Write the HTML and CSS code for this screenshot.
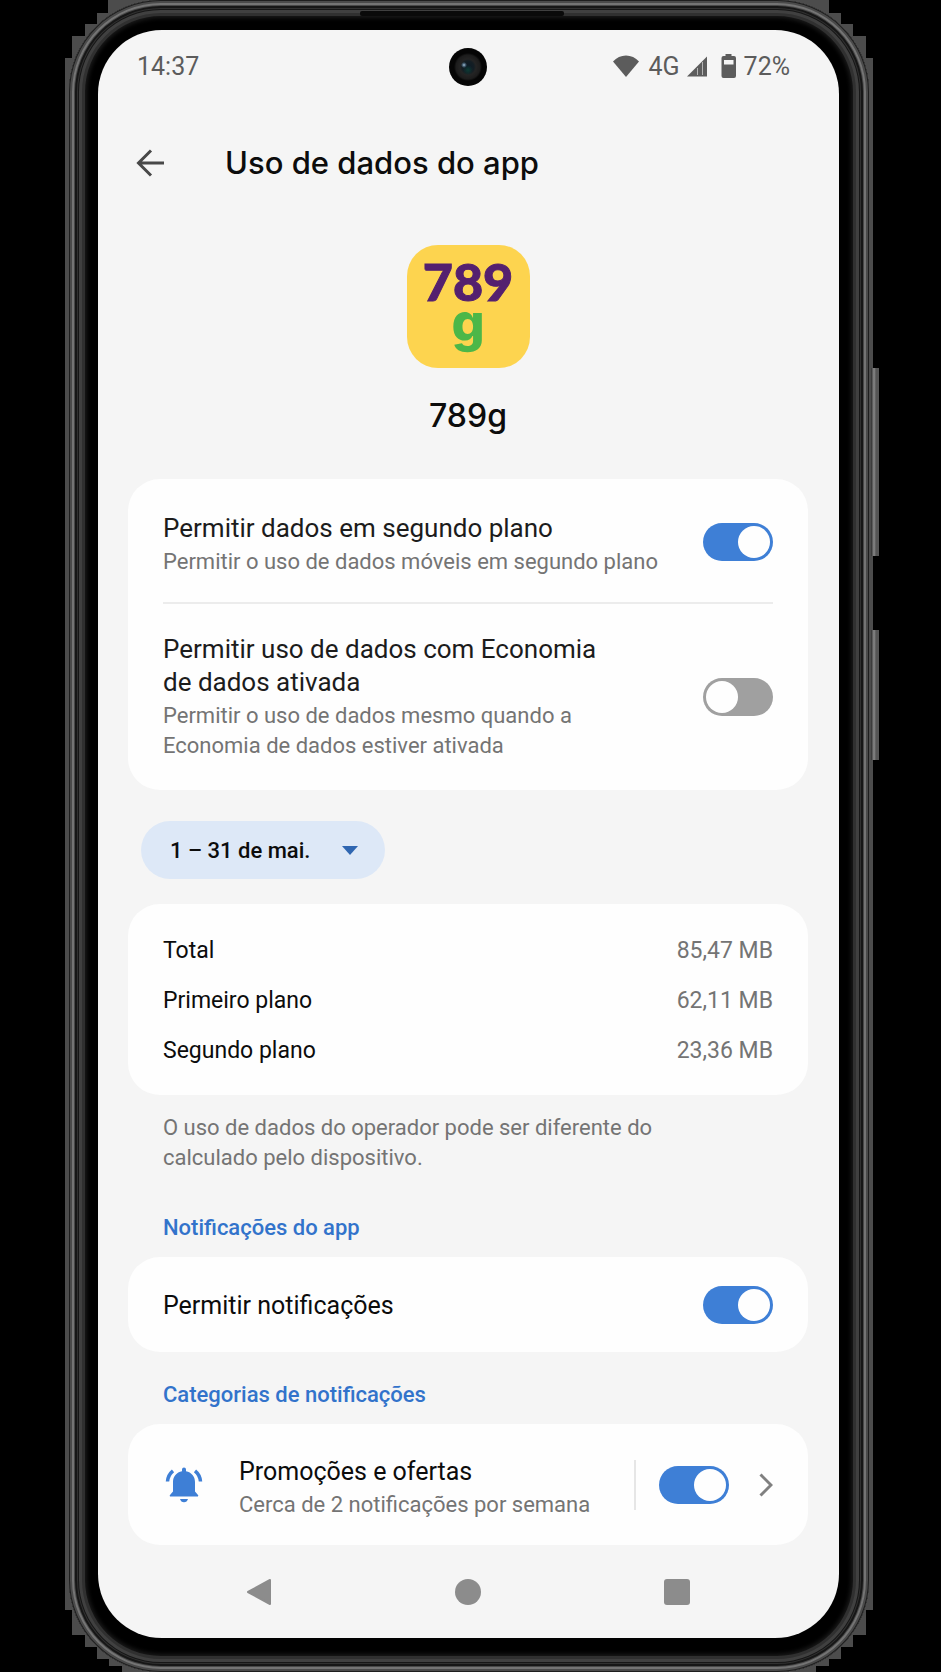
FILE: index.html
```
<!DOCTYPE html>
<html lang="pt-BR">
<head>
<meta charset="utf-8">
<meta name="viewport" content="width=device-width, initial-scale=1">
<title>Uso de dados do app</title>
<link rel="stylesheet" href="styles.css">
</head>
<body>
<div class="device">
	<div class="edge"></div>
	<span class="key key-volume"></span>
	<span class="key key-power"></span>
	<div class="frame">
		<span class="speaker"></span>
		<div class="screen">

			<div class="status">
				<span>14:37</span>
				<span class="camera"></span>
				<div class="status-icons">
					<svg width="28" height="24" viewBox="0 0 28 24" fill="#5c5c5c"><path d="M1 7.500C4.500 3.500 9 1.500 14 1.500s9.500 2 13 6L14 23z"/></svg>
					<span class="network">4G</span>
					<svg class="signal" width="22" height="24" viewBox="0 0 22 24"><path d="M1 22.500 21 2.500v20z" fill="#5c5c5c"/><path d="M11.500 14v7M16.500 8v13" stroke="#b4b4b4"/></svg>
					<svg class="battery" width="16" height="24" viewBox="0 0 16 24"><path fill="#5c5c5c" fill-rule="evenodd" d="M4.500 0h6v2H13a2 2 0 0 1 2 2v18a2 2 0 0 1-2 2H2.500a2 2 0 0 1-2-2V4a2 2 0 0 1 2-2h2zM3 6v4.500h9.500V6z"/></svg>
					<span>72%</span>
				</div>
			</div>

			<div class="topbar">
				<button class="back" type="button" aria-label="Voltar">
					<svg width="28" height="28" viewBox="0 0 28 28" fill="none" stroke="#484848" stroke-width="3"><path d="M28 14H3M15 1.500 2.500 14 15 26.500"/></svg>
				</button>
				<h1>Uso de dados do app</h1>
			</div>

			<div class="app">
				<div class="app-icon">
					<span class="logo-num">789</span>
					<span class="logo-g">g</span>
				</div>
				<div class="app-name">789g</div>
			</div>

			<div class="card">
				<label class="row row-bg">
					<span class="text">
						<span class="name">Permitir dados em segundo plano</span>
						<span class="desc">Permitir o uso de dados móveis em segundo plano</span>
					</span>
					<input class="switch" type="checkbox" checked>
				</label>
				<label class="row row-saver">
					<span class="text">
						<span class="name">Permitir uso de dados com Economia<br>de dados ativada</span>
						<span class="desc">Permitir o uso de dados mesmo quando a<br>Economia de dados estiver ativada</span>
					</span>
					<input class="switch" type="checkbox">
				</label>
			</div>

			<div class="period">
				<select aria-label="Período">
					<option>1 – 31 de mai.</option>
				</select>
				<svg width="16" height="9" viewBox="0 0 16 9"><path d="M0 0h16L8 9z" fill="#2f66b1"/></svg>
			</div>

			<div class="card usage">
				<table>
					<tr><th scope="row">Total</th><td>85,47 MB</td></tr>
					<tr><th scope="row">Primeiro plano</th><td>62,11 MB</td></tr>
					<tr><th scope="row">Segundo plano</th><td>23,36 MB</td></tr>
				</table>
			</div>

			<p class="note">O uso de dados do operador pode ser diferente do<br>calculado pelo dispositivo.</p>

			<h2>Notificações do app</h2>
			<div class="card">
				<label class="row row-notify">
					<span class="text name strong">Permitir notificações</span>
					<input class="switch" type="checkbox" checked>
				</label>
			</div>

			<h2 class="second">Categorias de notificações</h2>
			<div class="card">
				<div class="row row-category">
					<svg class="bell" width="38" height="38" viewBox="0 0 38 38" fill="#3e7fd6">
						<path d="M17 3.500a2 2 0 0 1 4 0v1.800c5.500 1 9 5.200 9 10.700v9.500l3 3.500c.6.800.2 1.500-.7 1.500H5.700c-.9 0-1.300-.7-.7-1.500l3-3.500V16c0-5.500 3.500-9.700 9-10.700zM15 33h8c-.5 2-2 3.300-4 3.300S15.500 35 15 33z"/>
						<path d="M2.500 15.500c.3-4.500 2.200-8 5.500-10.700M35.500 15.500c-.3-4.500-2.200-8-5.500-10.700" fill="none" stroke="#3e7fd6" stroke-width="3.500"/>
					</svg>
					<label class="text" for="promo">
						<span class="name strong">Promoções e ofertas</span>
						<span class="desc">Cerca de 2 notificações por semana</span>
					</label>
					<span class="rule"></span>
					<input class="switch" type="checkbox" id="promo" checked>
					<button class="more" type="button" aria-label="Abrir categoria">
						<svg width="14" height="24" viewBox="0 0 14 24" fill="none" stroke="#808080" stroke-width="3"><path d="m1.500 1.500 10.500 10.500-10.500 10.500"/></svg>
					</button>
				</div>
			</div>

			<div class="nav">
				<button type="button" aria-label="Voltar"><svg width="28" height="28" viewBox="0 0 28 28"><path d="M3 14 25 2v24z" fill="#8c8c8c" stroke="#8c8c8c" stroke-width="2" stroke-linejoin="round"/></svg></button>
				<button type="button" aria-label="Início"><svg width="28" height="28" viewBox="0 0 28 28"><circle cx="14" cy="14" r="13" fill="#8c8c8c"/></svg></button>
				<button type="button" aria-label="Recentes"><svg width="28" height="28" viewBox="0 0 28 28"><rect x="1" y="1" width="26" height="26" rx="3" fill="#8c8c8c"/></svg></button>
			</div>

		</div>
	</div>
</div>
</body>
</html>
```
FILE: styles.css
```
* {
	box-sizing: border-box;
}

body {
	margin: 0;
	padding: 0 68px 0 65px;
	background: #000;
	font-family: Roboto, "Liberation Sans", sans-serif;
	font-size: 22px;
	color: #0c0c0c;
}

button {
	display: flex;
	padding: 0;
	border: 0;
	background: none;
}

svg {
	display: block;
	flex: none;
}

/* phone body */

.device {
	position: relative;
	padding: 0 4px;
}

.edge {
	position: absolute;
	inset: 0;
	background: #4c4c4c;
	clip-path: polygon(
		43px 0, 43px 13px, 32px 13px, 32px 24px, 20px 24px, 20px 36px, 7px 36px, 7px 58px, 0 58px,
		0 calc(100% - 62px), 7px calc(100% - 62px), 7px calc(100% - 37px), 20px calc(100% - 37px),
		20px calc(100% - 25px), 32px calc(100% - 25px), 32px calc(100% - 13px), 44px calc(100% - 13px),
		44px calc(100% - 6px), 57px calc(100% - 6px), 57px 100%,
		calc(100% - 57px) 100%, calc(100% - 57px) calc(100% - 6px), calc(100% - 44px) calc(100% - 6px),
		calc(100% - 44px) calc(100% - 13px), calc(100% - 32px) calc(100% - 13px), calc(100% - 32px) calc(100% - 25px),
		calc(100% - 20px) calc(100% - 25px), calc(100% - 20px) calc(100% - 37px), calc(100% - 7px) calc(100% - 37px),
		calc(100% - 7px) calc(100% - 62px), 100% calc(100% - 62px), 100% 58px,
		calc(100% - 7px) 58px, calc(100% - 7px) 36px, calc(100% - 20px) 36px, calc(100% - 20px) 24px,
		calc(100% - 32px) 24px, calc(100% - 32px) 13px, calc(100% - 44px) 13px, calc(100% - 44px) 0);
}

.key {
	position: absolute;
	right: -6px;
	width: 8px;
	background: linear-gradient(90deg, #2c2c2c, #8a8a8a 3px, #555 5px, #555);
}

.key-volume {
	top: 368px;
	height: 188px;
}

.key-power {
	top: 630px;
	height: 130px;
}

.frame {
	position: relative;
	padding: 30px 30px 34px 29px;
	border-radius: 92px;
	background: #000;
	box-shadow:
		inset 0 0 0 1px #1e1e1e,
		inset 0 0 0 3px #4a4a4a,
		inset 0 0 0 5px #747474,
		inset 0 0 0 6px #484848,
		inset 0 0 0 8px #161616,
		inset 0 0 0 9px #303030,
		inset 0 0 0 10px #161616,
		inset 0 0 0 13px #404040,
		inset 0 0 0 16px #303030,
		inset 0 0 4px 18px #1a1a1a;
}

.speaker {
	position: absolute;
	top: 11px;
	left: 50%;
	width: 204px;
	height: 5px;
	margin-left: -109px;
	border-radius: 2px;
	background: #0a0a0a;
}

.screen {
	overflow: hidden;
	padding: 0 31px 0 30px;
	border-radius: 64px;
	background: #f5f5f5;
}

/* status bar and title */

.status {
	position: relative;
	display: flex;
	justify-content: space-between;
	align-items: center;
	height: 72px;
	padding: 0 18px 0 9px;
	font-size: 25px;
	color: #5c5c5c;
}

.status-icons {
	display: flex;
	align-items: center;
}

.network {
	margin-left: 8px;
}

.signal {
	margin-left: 6px;
}

.battery {
	margin: 0 7px 0 13px;
}

.camera {
	position: absolute;
	top: 18px;
	left: 50%;
	width: 38px;
	height: 38px;
	margin-left: -19px;
	border-radius: 50%;
	background:
		radial-gradient(circle at 15px 17px, #c8dcea 0, #5a7890 1px, transparent 3px),
		radial-gradient(circle at 19px 22px, #0d3b34 0, transparent 5px),
		radial-gradient(circle, #0c1a26 0, #141e24 6px, #242424 8px, #1c1c1c 12px, #050505 14px);
}

.topbar {
	display: flex;
	align-items: center;
	gap: 61px;
	height: 122px;
	padding-left: 8px;
}

h1 {
	margin: 0;
	font: 500 31px/40px Inter, Roboto, sans-serif;
}

.app {
	display: flex;
	flex-direction: column;
	align-items: center;
	padding: 21px 0 43px;
}

.app-icon {
	display: flex;
	flex-direction: column;
	align-items: center;
	width: 123px;
	height: 123px;
	padding-top: 14px;
	border-radius: 31px;
	background: #fdd44f;
}

.logo-num {
	font: 900 52px/44px Lato, sans-serif;
	color: #54206f;
	-webkit-text-stroke: 1px #54206f;
}

.logo-g {
	font: 800 52px/40px Inter, sans-serif;
	color: #4cb748;
}

.app-name {
	margin-top: 28px;
	font: 500 32px/40px Inter, Roboto, sans-serif;
}

/* cards */

.card {
	padding: 0 35px;
	border-radius: 32px;
	background: #fefefe;
}

.row {
	display: flex;
	justify-content: space-between;
	align-items: center;
}

.row-bg {
	padding: 33px 0 25px;
	border-bottom: 2px solid #ececec;
}

.row-bg .switch {
	margin-bottom: 6px;
}

.row-saver {
	padding: 29px 0;
}

.row-notify {
	min-height: 95px;
}

.row-notify .text {
	padding-top: 2px;
}

.row-category {
	min-height: 121px;
}

.name,
.desc {
	display: block;
}

.name {
	font-size: 26px;
	line-height: 33px;
	color: #1c1c1c;
}

.strong {
	font-size: 25px;
	color: #0c0c0c;
}

.desc {
	margin-top: 2px;
	font-size: 22px;
	line-height: 30px;
	color: #747474;
}

.switch {
	appearance: none;
	flex: none;
	display: flex;
	width: 70px;
	height: 38px;
	margin: 0;
	padding: 3px;
	border-radius: 19px;
	background: #a0a0a0;
}

.switch::before {
	content: "";
	width: 32px;
	height: 32px;
	border-radius: 50%;
	background: #fefefe;
}

.switch:checked {
	justify-content: flex-end;
	background: #3e7fd6;
}

.bell {
	margin-left: 2px;
}

.row-category .text {
	flex: 1;
	margin-left: 36px;
	padding-top: 5px;
}

.rule {
	width: 2px;
	height: 50px;
	margin-right: 23px;
	background: #e6e6e6;
}

.more {
	margin-left: 30px;
}

/* billing cycle */

.period {
	position: relative;
	width: 244px;
	margin: 31px 0 25px 13px;
}

.period select {
	appearance: none;
	display: block;
	width: 100%;
	height: 58px;
	padding: 0 29px;
	border: 0;
	border-radius: 29px;
	background: #dde8f7;
	font: 500 22px Roboto, sans-serif;
	color: #0c0c0c;
}

.period svg {
	position: absolute;
	top: 25px;
	right: 27px;
	pointer-events: none;
}

.usage {
	padding-top: 21px;
	padding-bottom: 20px;
}

table {
	width: 100%;
	border-collapse: collapse;
	font-size: 23px;
}

th,
td {
	height: 50px;
	padding: 0;
	font-weight: 400;
	text-align: left;
}

td {
	text-align: right;
	color: #747474;
}

.note {
	margin: 18px 35px 0;
	line-height: 30px;
	color: #747474;
}

h2 {
	margin: 40px 35px 14px;
	font-size: 22px;
	font-weight: 500;
	line-height: 30px;
	color: #3273cb;
}

h2.second {
	margin-top: 28px;
}

/* navigation */

.nav {
	display: flex;
	justify-content: space-between;
	align-items: center;
	height: 93px;
	padding: 0 117px;
}
```
